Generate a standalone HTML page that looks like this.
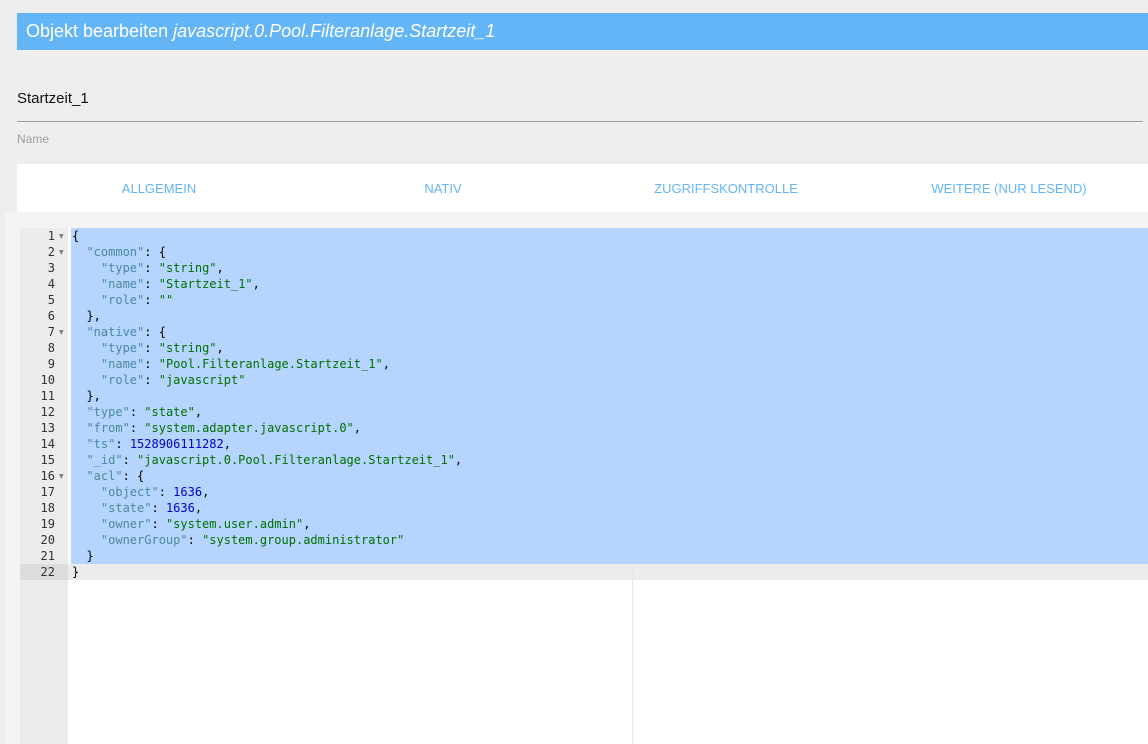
<!DOCTYPE html>
<html><head><meta charset="utf-8"><style>
body{margin:0;width:1148px;height:744px;overflow:hidden;background:#eeeeee;font-family:"Segoe UI","Liberation Sans",sans-serif;position:relative}
.hdr{position:absolute;left:17px;top:13px;width:1131px;height:37px;background:#64b5f6;color:#fff;font-size:18px;line-height:37px;padding-left:9px;box-sizing:border-box}
.nm{position:absolute;left:17px;top:90px;font-size:15px;color:#111}
.ln{position:absolute;left:17px;top:121px;width:1126px;height:1px;background:#a0a0a0}
.lb{position:absolute;left:17px;top:132px;font-size:12px;color:#9e9e9e}
.tabs{position:absolute;left:17px;top:164px;width:1131px;height:48px;background:#fff}
.tabs span{position:absolute;top:17px;font-size:13px;color:#64b5f6;transform:translateX(-50%);white-space:nowrap}
.area{position:absolute;left:5px;top:212px;width:1143px;height:532px;background:#f5f3f1}
.gut{position:absolute;left:20px;top:228px;width:48px;height:516px;background:#ebebeb}
.ed{position:absolute;left:68px;top:228px;width:1080px;height:516px;background:#fff}
.sel{position:absolute;left:71px;top:228px;width:1077px;height:336px;background:#b5d5ff}
.act{position:absolute;left:68px;top:564px;width:1080px;height:16px;background:#ececec}
.actg{position:absolute;left:20px;top:564px;width:48px;height:16px;background:#dcdcdc}
.pm{position:absolute;left:632px;top:564px;width:1px;height:180px;background:#e8e8e8}
.code,.nums{position:absolute;top:228px;font-family:"DejaVu Sans Mono","Liberation Mono",monospace;font-size:12px;line-height:16px;white-space:pre}
.nums{left:20px;width:35px;text-align:right;color:#333}
.fold{position:absolute;left:59px;font-size:6px;color:#777;font-family:"DejaVu Sans",sans-serif}
.code{left:72px;color:#000}
.k{color:#4a8a9c}.s{color:#007000}.n{color:#0000cd}
</style></head><body>
<div class="hdr">Objekt bearbeiten <i>javascript.0.Pool.Filteranlage.Startzeit_1</i></div>
<div class="nm">Startzeit_1</div>
<div class="ln"></div>
<div class="lb">Name</div>
<div class="tabs"><span style="left:142px">ALLGEMEIN</span><span style="left:426px">NATIV</span><span style="left:709px">ZUGRIFFSKONTROLLE</span><span style="left:992px">WEITERE (NUR LESEND)</span></div>
<div class="area"></div>
<div class="gut"></div>
<div class="ed"></div>
<div class="sel"></div>
<div class="act"></div>
<div class="actg"></div>
<div class="pm"></div>
<div class="nums">1
2
3
4
5
6
7
8
9
10
11
12
13
14
15
16
17
18
19
20
21
22</div>
<div class="fold" style="top:233px">▼</div>
<div class="fold" style="top:249px">▼</div>
<div class="fold" style="top:329px">▼</div>
<div class="fold" style="top:473px">▼</div>
<div class="code">{
  <span class="k">"common"</span>: {
    <span class="k">"type"</span>: <span class="s">"string"</span>,
    <span class="k">"name"</span>: <span class="s">"Startzeit_1"</span>,
    <span class="k">"role"</span>: <span class="s">""</span>
  },
  <span class="k">"native"</span>: {
    <span class="k">"type"</span>: <span class="s">"string"</span>,
    <span class="k">"name"</span>: <span class="s">"Pool.Filteranlage.Startzeit_1"</span>,
    <span class="k">"role"</span>: <span class="s">"javascript"</span>
  },
  <span class="k">"type"</span>: <span class="s">"state"</span>,
  <span class="k">"from"</span>: <span class="s">"system.adapter.javascript.0"</span>,
  <span class="k">"ts"</span>: <span class="n">1528906111282</span>,
  <span class="k">"_id"</span>: <span class="s">"javascript.0.Pool.Filteranlage.Startzeit_1"</span>,
  <span class="k">"acl"</span>: {
    <span class="k">"object"</span>: <span class="n">1636</span>,
    <span class="k">"state"</span>: <span class="n">1636</span>,
    <span class="k">"owner"</span>: <span class="s">"system.user.admin"</span>,
    <span class="k">"ownerGroup"</span>: <span class="s">"system.group.administrator"</span>
  }
}</div>
</body></html>
